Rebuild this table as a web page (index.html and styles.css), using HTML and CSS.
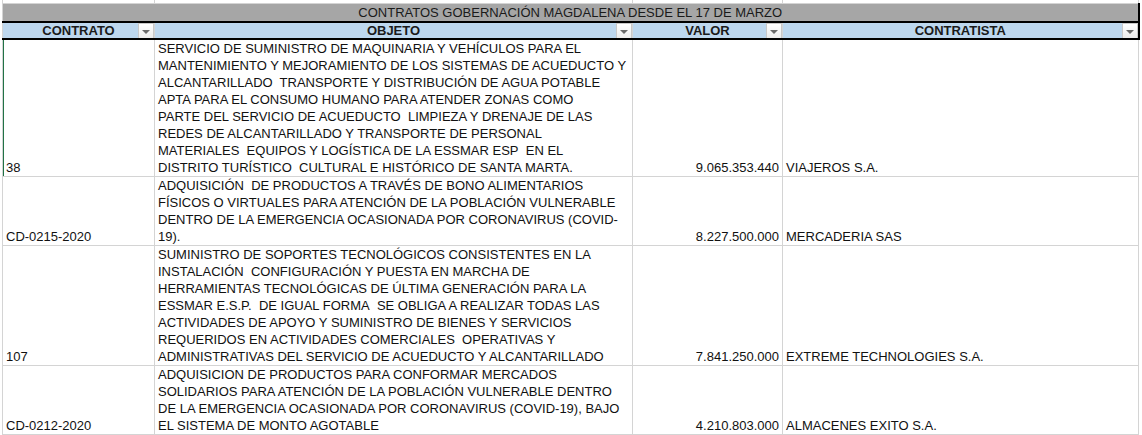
FILE: index.html
```html
<!DOCTYPE html>
<html lang="es">
<head>
<meta charset="utf-8">
<title>Contratos Gobernación Magdalena</title>
<link rel="stylesheet" href="styles.css">
</head>
<body>
<table class="sheet">
  <colgroup>
    <col class="c-a"><col class="c-b"><col class="c-c"><col class="c-d">
  </colgroup>
  <tr class="strip"><td></td><td></td><td></td><td></td></tr>
  <tr class="title"><td colspan="4">CONTRATOS GOBERNACIÓN MAGDALENA DESDE EL 17 DE MARZO</td></tr>
  <tr class="head">
    <td><span class="lbl">CONTRATO</span><span class="filter"><i></i></span></td>
    <td><span class="lbl">OBJETO</span><span class="filter"><i></i></span></td>
    <td><span class="lbl">VALOR</span><span class="filter"><i></i></span></td>
    <td class="last"><span class="lbl">CONTRATISTA</span><span class="filter"><i></i></span></td>
  </tr>
  <tr class="row r1">
    <td class="sel">38</td>
    <td>SERVICIO DE SUMINISTRO DE MAQUINARIA Y VEHÍCULOS PARA EL<br>MANTENIMIENTO Y MEJORAMIENTO DE LOS SISTEMAS DE ACUEDUCTO Y<br>ALCANTARILLADO&nbsp; TRANSPORTE Y DISTRIBUCIÓN DE AGUA POTABLE<br>APTA PARA EL CONSUMO HUMANO PARA ATENDER ZONAS COMO<br>PARTE DEL SERVICIO DE ACUEDUCTO&nbsp; LIMPIEZA Y DRENAJE DE LAS<br>REDES DE ALCANTARILLADO Y TRANSPORTE DE PERSONAL<br>MATERIALES&nbsp; EQUIPOS Y LOGÍSTICA DE LA ESSMAR ESP&nbsp; EN EL<br>DISTRITO TURÍSTICO&nbsp; CULTURAL E HISTÓRICO DE SANTA MARTA.</td>
    <td class="num">9.065.353.440</td>
    <td>VIAJEROS S.A.</td>
  </tr>
  <tr class="row r2">
    <td>CD-0215-2020</td>
    <td>ADQUISICIÓN&nbsp; DE PRODUCTOS A TRAVÉS DE BONO ALIMENTARIOS<br>FÍSICOS O VIRTUALES PARA ATENCIÓN DE LA POBLACIÓN VULNERABLE<br>DENTRO DE LA EMERGENCIA OCASIONADA POR CORONAVIRUS (COVID-<br>19).</td>
    <td class="num">8.227.500.000</td>
    <td>MERCADERIA SAS</td>
  </tr>
  <tr class="row r3">
    <td>107</td>
    <td>SUMINISTRO DE SOPORTES TECNOLÓGICOS CONSISTENTES EN LA<br>INSTALACIÓN&nbsp; CONFIGURACIÓN Y PUESTA EN MARCHA DE<br>HERRAMIENTAS TECNOLÓGICAS DE ÚLTIMA GENERACIÓN PARA LA<br>ESSMAR E.S.P.&nbsp; DE IGUAL FORMA&nbsp; SE OBLIGA A REALIZAR TODAS LAS<br>ACTIVIDADES DE APOYO Y SUMINISTRO DE BIENES Y SERVICIOS<br>REQUERIDOS EN ACTIVIDADES COMERCIALES&nbsp; OPERATIVAS Y<br>ADMINISTRATIVAS DEL SERVICIO DE ACUEDUCTO Y ALCANTARILLADO</td>
    <td class="num">7.841.250.000</td>
    <td>EXTREME TECHNOLOGIES S.A.</td>
  </tr>
  <tr class="row r4">
    <td>CD-0212-2020</td>
    <td>ADQUISICION DE PRODUCTOS PARA CONFORMAR MERCADOS<br>SOLIDARIOS PARA ATENCIÓN DE LA POBLACIÓN VULNERABLE DENTRO<br>DE LA EMERGENCIA OCASIONADA POR CORONAVIRUS (COVID-19), BAJO<br>EL SISTEMA DE MONTO AGOTABLE</td>
    <td class="num">4.210.803.000</td>
    <td>ALMACENES EXITO S.A.</td>
  </tr>
  <tr class="row r5"><td></td><td></td><td></td><td></td></tr>
</table>
</body>
</html>
```

FILE: styles.css
```css
html, body {
  margin: 0;
  padding: 0;
  background: #ffffff;
  overflow: hidden;
}

body {
  font-family: "Liberation Sans", Arial, sans-serif;
  font-size: 13px;
  color: #111;
}

.sheet {
  border-collapse: collapse;
  table-layout: fixed;
  margin-left: 2px;
  width: 1136px;
}

.c-a { width: 152px; }
.c-b { width: 478px; }
.c-c { width: 150px; }
.c-d { width: 356px; }

.sheet td {
  border: 1px solid #d4d4d4;
  padding: 0 3px;
  line-height: 17px;
  vertical-align: bottom;
  white-space: nowrap;
  overflow: hidden;
}

.strip td {
  height: 3px;
  line-height: 0;
  padding: 0;
  border-top: none;
}

.title td {
  height: 17px;
  background: #a6a6a6;
  text-align: center;
  color: #1a1a1a;
  border-bottom: 2px solid #000;
  border-right: 2px solid #000;
  line-height: 16px;
}

.head td {
  position: relative;
  height: 15px;
  background: #bdd7ee;
  text-align: center;
  font-weight: bold;
  color: #1a1a1a;
  border-bottom: 2px solid #000;
  line-height: 15px;
  vertical-align: middle;
}

.head td.last {
  border-right: 2px solid #000;
}

.filter {
  position: absolute;
  right: 0;
  top: 0;
  width: 14px;
  height: 14px;
  border: 1px solid #c9c9c9;
  background: linear-gradient(#ffffff, #ececec);
  display: flex;
  align-items: center;
  justify-content: center;
}

.filter i {
  width: 0;
  height: 0;
  border-left: 4px solid transparent;
  border-right: 4px solid transparent;
  border-top: 4px solid #6a6a6a;
  margin-top: 1px;
}

.row td {
  color: #111;
}

.r1 td { height: 136px; }
.r2 td { height: 66px; }
.r3 td { height: 118px; }
.r4 td { height: 67px; }
.r5 td { height: 17px; }

.num {
  text-align: right;
}

.sel {
  position: relative;
}

.sel::before {
  content: "";
  position: absolute;
  left: -2px;
  top: 0;
  bottom: 0;
  width: 3px;
  background: #217346;
}
```
